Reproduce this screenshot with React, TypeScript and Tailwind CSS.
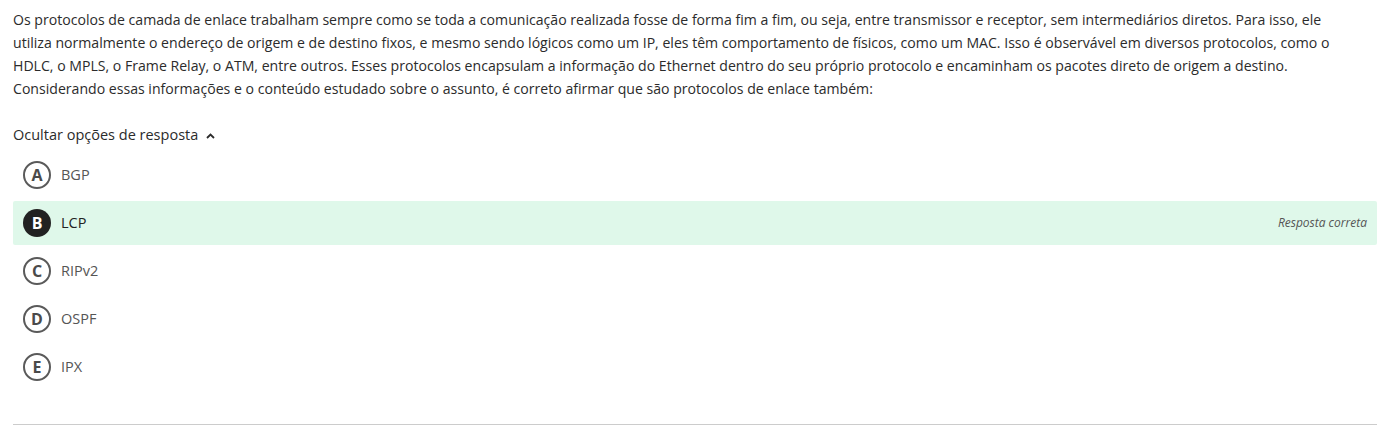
import React from "react";

// Answer options
const OPTIONS = [
  { letter: "A", label: "BGP" },
  { letter: "B", label: "LCP", correct: true },
  { letter: "C", label: "RIPv2" },
  { letter: "D", label: "OSPF" },
  { letter: "E", label: "IPX" },
];

const QUESTION =
  "Os protocolos de camada de enlace trabalham sempre como se toda a comunicação realizada fosse de forma fim a fim, ou seja, entre transmissor e receptor, sem intermediários diretos. Para isso, ele utiliza normalmente o endereço de origem e de destino fixos, e mesmo sendo lógicos como um IP, eles têm comportamento de físicos, como um MAC. Isso é observável em diversos protocolos, como o HDLC, o MPLS, o Frame Relay, o ATM, entre outros. Esses protocolos encapsulam a informação do Ethernet dentro do seu próprio protocolo e encaminham os pacotes direto de origem a destino. Considerando essas informações e o conteúdo estudado sobre o assunto, é correto afirmar que são protocolos de enlace também:";

const App = () => {
  return (
    <div className="min-h-screen bg-white pl-[13px] pr-[11px] pt-[8px] font-['Open_Sans',sans-serif] text-[#2b2b2b]">
      <p className="max-w-[1335px] text-[14.1px] leading-[23px]">{QUESTION}</p>

      <button className="mt-[25px] flex items-center gap-[8px] text-[14.5px] leading-[20px] text-[#2b2b2b]">
        Ocultar opções de resposta
        <svg width="9" height="6" viewBox="0 0 9 6" className="mt-[2px]">
          <path d="M1 5 L4.5 1.5 L8 5" fill="none" stroke="#2b2b2b" strokeWidth="1.8" />
        </svg>
      </button>

      <div className="mt-[8px] flex flex-col gap-[4px]">
        {OPTIONS.map((opt) => (
          <div
            key={opt.letter}
            className={
              opt.correct
                ? "flex h-[44px] items-center rounded-[2px] bg-[#dff8ea] pl-[10px] pr-[10px]"
                : "flex h-[44px] items-center pl-[10px] pr-[10px]"
            }
          >
            {opt.correct ? (
              <span className="flex h-[28px] w-[28px] items-center justify-center rounded-full bg-[#222222] text-[16px] font-bold text-white">
                {opt.letter}
              </span>
            ) : (
              <span className="flex h-[28px] w-[28px] items-center justify-center rounded-full border-2 border-[#5a5a5a] text-[16px] font-bold text-[#4a4a4a]">
                {opt.letter}
              </span>
            )}
            <span
              className={
                opt.correct
                  ? "ml-[10px] text-[14.5px] text-[#222222]"
                  : "ml-[10px] text-[14.5px] text-[#555555]"
              }
            >
              {opt.label}
            </span>
            {opt.correct && (
              <span className="ml-auto text-[12px] italic text-[#555555]">Resposta correta</span>
            )}
          </div>
        ))}
      </div>

      <div className="mt-[35px] border-t border-[#cccccc]" />
    </div>
  );
};

export default App;
